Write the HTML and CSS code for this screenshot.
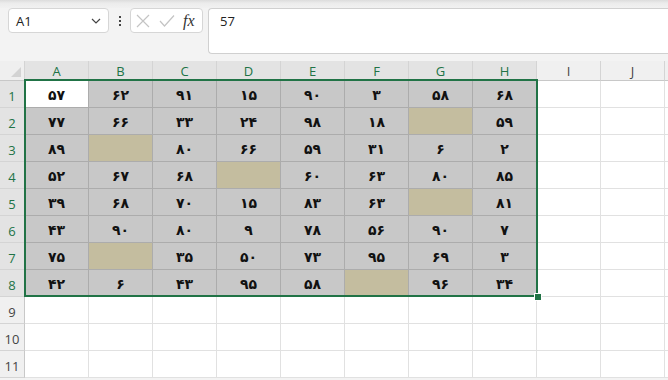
FILE: index.html
```html
<!DOCTYPE html>
<html lang="fa">
<head>
    <meta charset="UTF-8">
    <meta name="viewport" content="width=device-width, initial-scale=1.0">
    <title>Book1 - Excel</title>
    <link rel="stylesheet" href="styles.css">
</head>
<body>
    <div class="ribbon-edge"></div>

    <div class="formula-bar">
        <div class="name-box">
            <span>A1</span>
            <svg class="chevron" width="10" height="6" viewBox="0 0 10 6"><path d="M1 1 L5 5 L9 1" fill="none" stroke="#444" stroke-width="1.2"/></svg>
        </div>
        <div class="more-dots"><i></i><i></i><i></i></div>
        <div class="fx-buttons">
            <svg width="14" height="14" viewBox="0 0 14 14"><path d="M1 1 L13 13 M13 1 L1 13" stroke="#c4c4c4" stroke-width="1.2"/></svg>
            <svg width="16" height="14" viewBox="0 0 16 14"><path d="M1 7 L5.5 12 L15 1.5" fill="none" stroke="#c4c4c4" stroke-width="1.2"/></svg>
            <span class="fx">fx</span>
        </div>
        <div class="formula-input">57</div>
    </div>

    <div class="sheet">
        <div class="corner"></div>
        <div class="col-head sel">A</div>
        <div class="col-head sel">B</div>
        <div class="col-head sel">C</div>
        <div class="col-head sel">D</div>
        <div class="col-head sel">E</div>
        <div class="col-head sel">F</div>
        <div class="col-head sel">G</div>
        <div class="col-head sel">H</div>
        <div class="col-head">I</div>
        <div class="col-head">J</div>
        <div class="col-head"></div>

        <div class="row-head sel">1</div>
        <div class="cell active">۵۷</div><div class="cell data">۶۲</div><div class="cell data">۹۱</div><div class="cell data">۱۵</div><div class="cell data">۹۰</div><div class="cell data">۳</div><div class="cell data">۵۸</div><div class="cell data">۶۸</div>
        <div class="cell"></div><div class="cell"></div><div class="cell"></div>

        <div class="row-head sel">2</div>
        <div class="cell data">۷۷</div><div class="cell data">۶۶</div><div class="cell data">۳۳</div><div class="cell data">۲۴</div><div class="cell data">۹۸</div><div class="cell data">۱۸</div><div class="cell data tan"></div><div class="cell data">۵۹</div>
        <div class="cell"></div><div class="cell"></div><div class="cell"></div>

        <div class="row-head sel">3</div>
        <div class="cell data">۸۹</div><div class="cell data tan"></div><div class="cell data">۸۰</div><div class="cell data">۶۶</div><div class="cell data">۵۹</div><div class="cell data">۳۱</div><div class="cell data">۶</div><div class="cell data">۲</div>
        <div class="cell"></div><div class="cell"></div><div class="cell"></div>

        <div class="row-head sel">4</div>
        <div class="cell data">۵۲</div><div class="cell data">۶۷</div><div class="cell data">۶۸</div><div class="cell data tan"></div><div class="cell data">۶۰</div><div class="cell data">۶۳</div><div class="cell data">۸۰</div><div class="cell data">۸۵</div>
        <div class="cell"></div><div class="cell"></div><div class="cell"></div>

        <div class="row-head sel">5</div>
        <div class="cell data">۳۹</div><div class="cell data">۶۸</div><div class="cell data">۷۰</div><div class="cell data">۱۵</div><div class="cell data">۸۳</div><div class="cell data">۶۳</div><div class="cell data tan"></div><div class="cell data">۸۱</div>
        <div class="cell"></div><div class="cell"></div><div class="cell"></div>

        <div class="row-head sel">6</div>
        <div class="cell data">۴۳</div><div class="cell data">۹۰</div><div class="cell data">۸۰</div><div class="cell data">۹</div><div class="cell data">۷۸</div><div class="cell data">۵۶</div><div class="cell data">۹۰</div><div class="cell data">۷</div>
        <div class="cell"></div><div class="cell"></div><div class="cell"></div>

        <div class="row-head sel">7</div>
        <div class="cell data">۷۵</div><div class="cell data tan"></div><div class="cell data">۳۵</div><div class="cell data">۵۰</div><div class="cell data">۷۳</div><div class="cell data">۹۵</div><div class="cell data">۶۹</div><div class="cell data">۳</div>
        <div class="cell"></div><div class="cell"></div><div class="cell"></div>

        <div class="row-head sel">8</div>
        <div class="cell data">۴۲</div><div class="cell data">۶</div><div class="cell data">۴۳</div><div class="cell data">۹۵</div><div class="cell data">۵۸</div><div class="cell data tan"></div><div class="cell data">۹۶</div><div class="cell data">۳۴</div>
        <div class="cell"></div><div class="cell"></div><div class="cell"></div>

        <div class="row-head">9</div>
        <div class="cell"></div><div class="cell"></div><div class="cell"></div><div class="cell"></div><div class="cell"></div><div class="cell"></div><div class="cell"></div><div class="cell"></div><div class="cell"></div><div class="cell"></div><div class="cell"></div>

        <div class="row-head">10</div>
        <div class="cell"></div><div class="cell"></div><div class="cell"></div><div class="cell"></div><div class="cell"></div><div class="cell"></div><div class="cell"></div><div class="cell"></div><div class="cell"></div><div class="cell"></div><div class="cell"></div>

        <div class="row-head">11</div>
        <div class="cell"></div><div class="cell"></div><div class="cell"></div><div class="cell"></div><div class="cell"></div><div class="cell"></div><div class="cell"></div><div class="cell"></div><div class="cell"></div><div class="cell"></div><div class="cell"></div>

        <div class="selection"></div>
        <div class="fill-handle"></div>
    </div>
</body>
</html>
```

FILE: styles.css
```css
html, body {
    margin: 0;
    height: 100%;
    overflow: hidden;
}
body {
    font-family: "Open Sans", "Noto Sans", sans-serif;
    background-color: #f3f3f3;
    color: #222;
}
.ribbon-edge {
    height: 8px;
    background: linear-gradient(#dcdcdc, #ececec 40%, #f1f1f1);
}

/* formula bar */
.formula-bar {
    display: flex;
    align-items: flex-start;
    height: 53px;
    padding-left: 8px;
    box-sizing: border-box;
}
.name-box {
    width: 101px;
    height: 25px;
    box-sizing: border-box;
    background-color: #fff;
    border: 1px solid #d6d6d6;
    border-radius: 4px;
    display: flex;
    align-items: center;
    justify-content: space-between;
    padding: 0 7px 0 7px;
    font-size: 13px;
    color: #222;
}
.chevron {
    margin-top: 1px;
}
.more-dots {
    width: 21px;
    height: 25px;
    display: flex;
    flex-direction: column;
    align-items: center;
    justify-content: center;
    gap: 2px;
}
.more-dots i {
    width: 2px;
    height: 2px;
    background-color: #444;
}
.fx-buttons {
    width: 73px;
    height: 25px;
    box-sizing: border-box;
    background-color: #fff;
    border: 1px solid #d6d6d6;
    border-radius: 4px;
    display: flex;
    align-items: center;
    gap: 9px;
    padding-left: 5px;
}
.fx {
    font-family: "Liberation Serif", serif;
    font-style: italic;
    font-size: 16px;
    color: #333;
    margin-left: -1px;
}
.formula-input {
    flex: 1;
    margin-left: 5px;
    height: 46px;
    box-sizing: border-box;
    background-color: #fff;
    border: 1px solid #d0d0d0;
    border-right: none;
    border-radius: 4px 0 0 4px;
    padding: 3px 0 0 11px;
    font-size: 13px;
    color: #222;
}

/* grid */
.sheet {
    position: relative;
    display: grid;
    grid-template-columns: 25px repeat(11, 64px);
    grid-template-rows: 20px repeat(11, 27px);
    background-color: #fff;
}
.corner {
    background-color: #efefef;
    border-right: 1px solid #d4d4d4;
    border-bottom: 1px solid #c8c8c8;
    position: relative;
}
.corner::after {
    content: "";
    position: absolute;
    right: 3px;
    bottom: 3px;
    border-style: solid;
    border-width: 0 0 10px 10px;
    border-color: transparent transparent #d3d3d3 transparent;
}
.col-head,
.row-head {
    box-sizing: border-box;
    display: flex;
    align-items: center;
    justify-content: center;
    font-size: 13px;
    color: #444;
    background-color: #f0f0f0;
}
.col-head {
    border-right: 1px solid #d4d4d4;
    border-bottom: 1px solid #c8c8c8;
    padding-top: 1px;
}
.row-head {
    border-right: 1px solid #c8c8c8;
    border-bottom: 1px solid #d4d4d4;
    padding-top: 4px;
}
.col-head.sel,
.row-head.sel {
    background-color: #e3e3e3;
    color: #217346;
}
.cell {
    box-sizing: border-box;
    border-right: 1px solid #e1e1e1;
    border-bottom: 1px solid #e1e1e1;
    display: flex;
    align-items: center;
    justify-content: center;
    font-family: "DejaVu Sans", sans-serif;
    font-size: 14px;
    font-weight: bold;
    color: #111;
    padding-top: 1px;
}
.cell.data {
    background-color: #c8c8c8;
    border-color: #acacac;
}
.cell.tan {
    background-color: #c4bd9f;
}
.cell.active {
    background-color: #fff;
    border-color: #acacac;
}
.selection {
    position: absolute;
    left: 24px;
    top: 18px;
    width: 514px;
    height: 218px;
    box-sizing: border-box;
    border: 2px solid #217346;
}
.fill-handle {
    position: absolute;
    left: 534px;
    top: 232px;
    width: 6px;
    height: 6px;
    background-color: #217346;
    border: 1px solid #fff;
}
```
